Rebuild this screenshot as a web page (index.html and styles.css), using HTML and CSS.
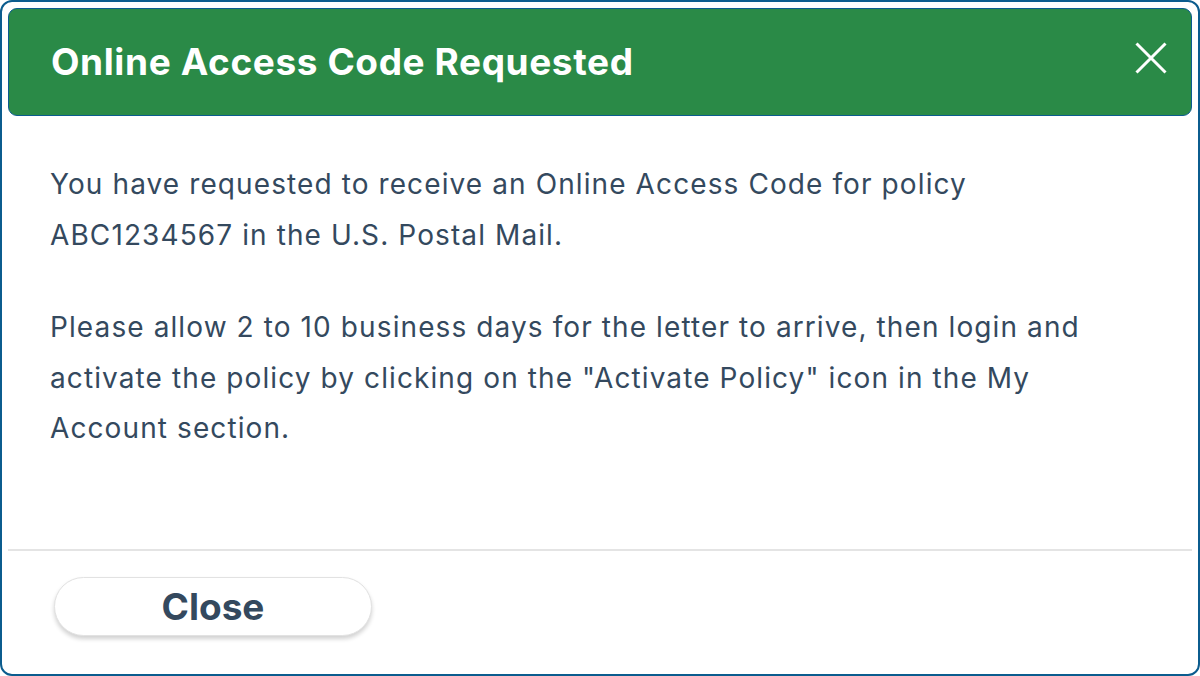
FILE: index.html
```html
<!DOCTYPE html>
<html>
<head>
<meta charset="utf-8">
<link rel="stylesheet" href="styles.css">
</head>
<body>
<div class="modal">
  <div class="modal-header">
    <h1 class="modal-title">Online Access Code Requested</h1>
    <button class="icon-close" aria-label="Close">
      <svg width="32" height="32" viewBox="0 0 32 32"><path d="M1.5 1.5 L30.5 30.5 M30.5 1.5 L1.5 30.5" stroke="#fff" stroke-width="3" fill="none"/></svg>
    </button>
  </div>
  <div class="modal-body">
    <p>You have requested to receive an Online Access Code for policy ABC1234567 in the U.S. Postal Mail.</p>
    <p>Please allow 2 to 10 business days for the letter to arrive, then login and activate the policy by clicking on the "Activate Policy" icon in the My Account section.</p>
  </div>
  <div class="modal-footer">
    <button class="btn-close">Close</button>
  </div>
</div>
</body>
</html>
```
FILE: styles.css
```css
html, body {
  margin: 0;
  padding: 0;
  background: #ffffff;
}
body {
  width: 1200px;
  height: 676px;
  font-family: Inter, "Liberation Sans", sans-serif;
  color: #34495e;
}
.modal {
  box-sizing: border-box;
  width: 1200px;
  height: 676px;
  border: 2px solid #0b5c8e;
  border-radius: 12px;
  background: #fff;
  padding: 6px 6px 0 6px;
  display: flex;
  flex-direction: column;
}
.modal-header {
  box-sizing: border-box;
  height: 108px;
  flex: none;
  background: #2a8a47;
  border: 1px solid #0b5c8e;
  border-radius: 9px;
  display: flex;
  align-items: center;
  justify-content: space-between;
  padding: 0 24px 2px 42px;
}
.modal-title {
  margin: 0;
  color: #fff;
  font-size: 37px;
  font-weight: 700;
  letter-spacing: 0.6px;
}
.icon-close {
  background: none;
  border: 0;
  padding: 0;
  width: 32px;
  height: 32px;
  display: flex;
  margin-top: -6px;
}
.modal-body {
  padding: 43px 42px 0 42px;
  flex: 1;
  font-size: 28px;
  line-height: 50.5px;
  letter-spacing: 1.1px;
}
.modal-body p {
  margin: 0 0 42px 0;
}
.modal-footer {
  flex: none;
  border-top: 2px solid #e4e4e4;
  height: 125px;
  box-sizing: border-box;
  padding: 26px 0 0 46px;
}
.btn-close {
  width: 318px;
  height: 59px;
  border-radius: 30px;
  border: 1px solid #e2e2e2;
  background: #fff;
  box-shadow: 0 3px 4px rgba(0,0,0,0.18);
  font-family: Inter, "Liberation Sans", sans-serif;
  font-size: 37px;
  font-weight: 700;
  color: #34495e;
  padding: 0;
}
```
